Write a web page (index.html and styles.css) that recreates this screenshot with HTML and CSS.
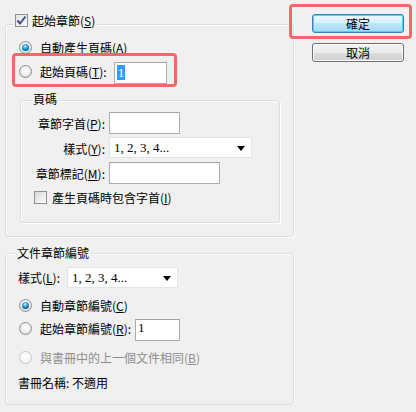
FILE: index.html
```html
<!DOCTYPE html>
<html lang="zh-Hant">
<head>
    <meta charset="UTF-8">
    <meta name="viewport" content="width=device-width, initial-scale=1.0">
    <title>起始章節</title>
    <link rel="stylesheet" href="styles.css">
</head>
<body>

<div class="dialog">
    <div class="main">
        <div class="group group-chapter">
            <div class="group-title">
                <span class="check is-checked">
                    <svg width="11" height="11" viewBox="0 0 11 11"><path d="M1.5 5.5 L4 8.5 L9.5 1.5" fill="none" stroke="#3d4f8a" stroke-width="2"/></svg>
                </span>
                <span>起始章節(<u>S</u>)</span>
            </div>

            <div class="opt-row">
                <span class="radio is-checked"></span>
                <span>自動產生頁碼(<u>A</u>)</span>
            </div>
            <div class="opt-row opt-field">
                <span class="radio"></span>
                <span>起始頁碼(<u>T</u>):</span>
                <span class="field field-page"><span class="selected">1</span></span>
            </div>
            <div class="mark mark-page"></div>

            <div class="group group-page">
                <div class="group-title">頁碼</div>
                <div class="form-grid">
                    <label>章節字首(<u>P</u>):</label>
                    <span class="field field-prefix"></span>
                    <label>樣式(<u>Y</u>):</label>
                    <span class="combo combo-wide">1, 2, 3, 4...<i class="arrow"></i></span>
                    <label>章節標記(<u>M</u>):</label>
                    <span class="field field-marker"></span>
                </div>
                <div class="opt-row check-row">
                    <span class="check"></span>
                    <span>產生頁碼時包含字首(<u>I</u>)</span>
                </div>
            </div>
        </div>

        <div class="group group-numbering">
            <div class="group-title">文件章節編號</div>
            <div class="style-row">
                <label>樣式(<u>L</u>):</label>
                <span class="combo combo-narrow">1, 2, 3, 4...<i class="arrow"></i></span>
            </div>
            <div class="opt-row num-auto">
                <span class="radio is-checked"></span>
                <span>自動章節編號(<u>C</u>)</span>
            </div>
            <div class="opt-row opt-field num-start">
                <span class="radio"></span>
                <span>起始章節編號(<u>R</u>):</span>
                <span class="field field-num">1</span>
            </div>
            <div class="opt-row num-same is-disabled">
                <span class="radio"></span>
                <span>與書冊中的上一個文件相同(<u>B</u>)</span>
            </div>
            <div class="book-name">書冊名稱: 不適用</div>
        </div>
    </div>

    <div class="actions">
        <button class="btn btn-default">確定</button>
        <button class="btn">取消</button>
        <div class="mark mark-ok"></div>
    </div>
</div>

</body>
</html>
```

FILE: styles.css
```css
body {
    margin: 0;
    background-color: #f0f0f0;
    font-family: "Noto Sans CJK TC", "Noto Sans", sans-serif;
    font-size: 12px;
    line-height: 13px;
    color: #000;
}

u {
    text-decoration: underline;
    text-underline-offset: 1px;
}

.dialog {
    display: flex;
    padding-left: 5px;
}

.main {
    width: 289px;
}

/* group boxes */
.group {
    position: relative;
    box-sizing: border-box;
    border: 1px solid #d5dfe5;
    border-radius: 3px;
    box-shadow: 1px 1px 0 #fff, inset 1px 1px 0 #fff;
}

.group-title {
    position: absolute;
    display: flex;
    align-items: center;
    gap: 4px;
    padding: 0 2px;
    background-color: #f0f0f0;
    line-height: 13px;
}

.group-chapter {
    margin-top: 24px;
    height: 213px;
    padding-top: 16px;
}

.group-chapter > .group-title {
    left: 7px;
    top: -11px;
}

.group-page {
    margin: 16px 13px 0 14px;
    height: 123px;
    padding-top: 11px;
}

.group-page > .group-title {
    left: 10px;
    top: -9px;
}

.group-numbering {
    margin-top: 16px;
    height: 152px;
    padding-top: 13px;
}

.group-numbering > .group-title {
    left: 9px;
    top: -8px;
}

/* option rows */
.opt-row {
    display: flex;
    align-items: center;
    gap: 8px;
    height: 13px;
    padding-left: 13px;
}

.opt-field {
    height: 22px;
    margin-top: 8px;
    gap: 0;
}

.opt-field .radio {
    margin-right: 8px;
    margin-top: -3px;
}

.opt-field > span:nth-child(2) {
    margin-top: -3px;
}

.is-disabled {
    color: #8d8d8d;
}

/* controls */
.radio {
    position: relative;
    flex: none;
    box-sizing: border-box;
    width: 13px;
    height: 13px;
    border: 1px solid #8e8f8f;
    border-radius: 50%;
    background: radial-gradient(circle at 50% 40%, #ffffff 0%, #f2f2f2 45%, #c9c9c9 100%);
}

.radio.is-checked::after {
    content: "";
    position: absolute;
    left: 2px;
    top: 2px;
    width: 7px;
    height: 7px;
    border-radius: 50%;
    background: radial-gradient(circle at 45% 35%, #c9f3ff 0%, #46b4ee 30%, #1261a8 65%, #083d75 100%);
}

.is-disabled .radio {
    border-color: #c8c8c8;
    background: radial-gradient(circle at 50% 40%, #ffffff 0%, #f6f6f6 60%, #e2e2e2 100%);
}

.check {
    display: flex;
    align-items: center;
    justify-content: center;
    flex: none;
    box-sizing: border-box;
    width: 13px;
    height: 13px;
    border: 1px solid #8e8f8f;
    background: linear-gradient(135deg, #d6d6d6 0%, #eeeeee 60%, #fbfbfb 100%);
}

.check.is-checked {
    background: linear-gradient(135deg, #e4e4e4 0%, #f8f8f8 100%);
}

.field {
    box-sizing: border-box;
    height: 22px;
    border: 1px solid #abadb3;
    border-top-color: #a3a3a3;
    background-color: #fff;
    font-family: "Liberation Serif", serif;
    font-size: 13px;
    line-height: 18px;
    padding: 1px 2px;
}

.field-page {
    width: 53px;
    margin-left: 7px;
}

.selected {
    display: inline-block;
    background-color: #3399ff;
    color: #fff;
    padding: 0 1px;
    line-height: 15px;
}

.field-prefix {
    width: 71px;
}

.field-marker {
    width: 111px;
}

.field-num {
    width: 45px;
    margin-left: 4px;
    line-height: 14px;
}

.combo {
    position: relative;
    box-sizing: border-box;
    height: 21px;
    border: 1px solid #e1e4e8;
    background-color: #fff;
    font-family: "Liberation Serif", serif;
    font-size: 13px;
    line-height: 19px;
    padding-left: 4px;
}

.combo-wide {
    width: 143px;
}

.combo-narrow {
    width: 111px;
}

.arrow {
    position: absolute;
    right: 6px;
    top: 8px;
    border-left: 4px solid transparent;
    border-right: 4px solid transparent;
    border-top: 5px solid #000;
}

/* page sub group */
.form-grid {
    display: grid;
    grid-template-columns: 84px auto;
    grid-auto-rows: 22px;
    row-gap: 3px;
    column-gap: 4px;
    align-items: center;
    justify-items: start;
}

.form-grid label {
    justify-self: end;
}

.form-grid .combo {
    align-self: start;
}

.check-row {
    margin-top: 7px;
    gap: 5px;
}

/* numbering group */
.style-row {
    display: flex;
    align-items: center;
    padding-left: 12px;
}

.style-row label {
    width: 49px;
}

.num-auto {
    margin-top: 11px;
}

.num-start {
    margin-top: 7px;
}

.num-same {
    margin-top: 10px;
}

.book-name {
    margin-top: 12px;
    padding-left: 12px;
}

/* buttons */
.actions {
    position: relative;
    display: flex;
    flex-direction: column;
    gap: 10px;
    margin-left: 18px;
    padding-top: 14px;
}

.btn {
    box-sizing: border-box;
    width: 92px;
    height: 19px;
    padding: 0;
    border: 1px solid #707070;
    border-radius: 3px;
    background: linear-gradient(#f2f2f2 0%, #ebebeb 50%, #dddddd 50%, #cfcfcf 100%);
    box-shadow: inset 0 0 0 1px #fcfcfc;
    font-family: "Noto Sans CJK TC", "Noto Sans", sans-serif;
    font-size: 12px;
    line-height: 15px;
    color: #000;
}

.btn-default {
    border-color: #3c7fb1;
    box-shadow: inset 0 0 0 1px #48d7fb;
    background: linear-gradient(#eaf6fd 0%, #d9f0fc 50%, #bee6fd 50%, #a7d9f5 100%);
}

/* annotation frames */
.mark {
    position: absolute;
    box-sizing: border-box;
    border: 3px solid #f26868;
    border-radius: 4px;
    pointer-events: none;
}

.mark-page {
    left: 6px;
    top: 28px;
    width: 165px;
    height: 34px;
}

.mark-ok {
    left: -23px;
    top: 4px;
    width: 123px;
    height: 35px;
}
```
